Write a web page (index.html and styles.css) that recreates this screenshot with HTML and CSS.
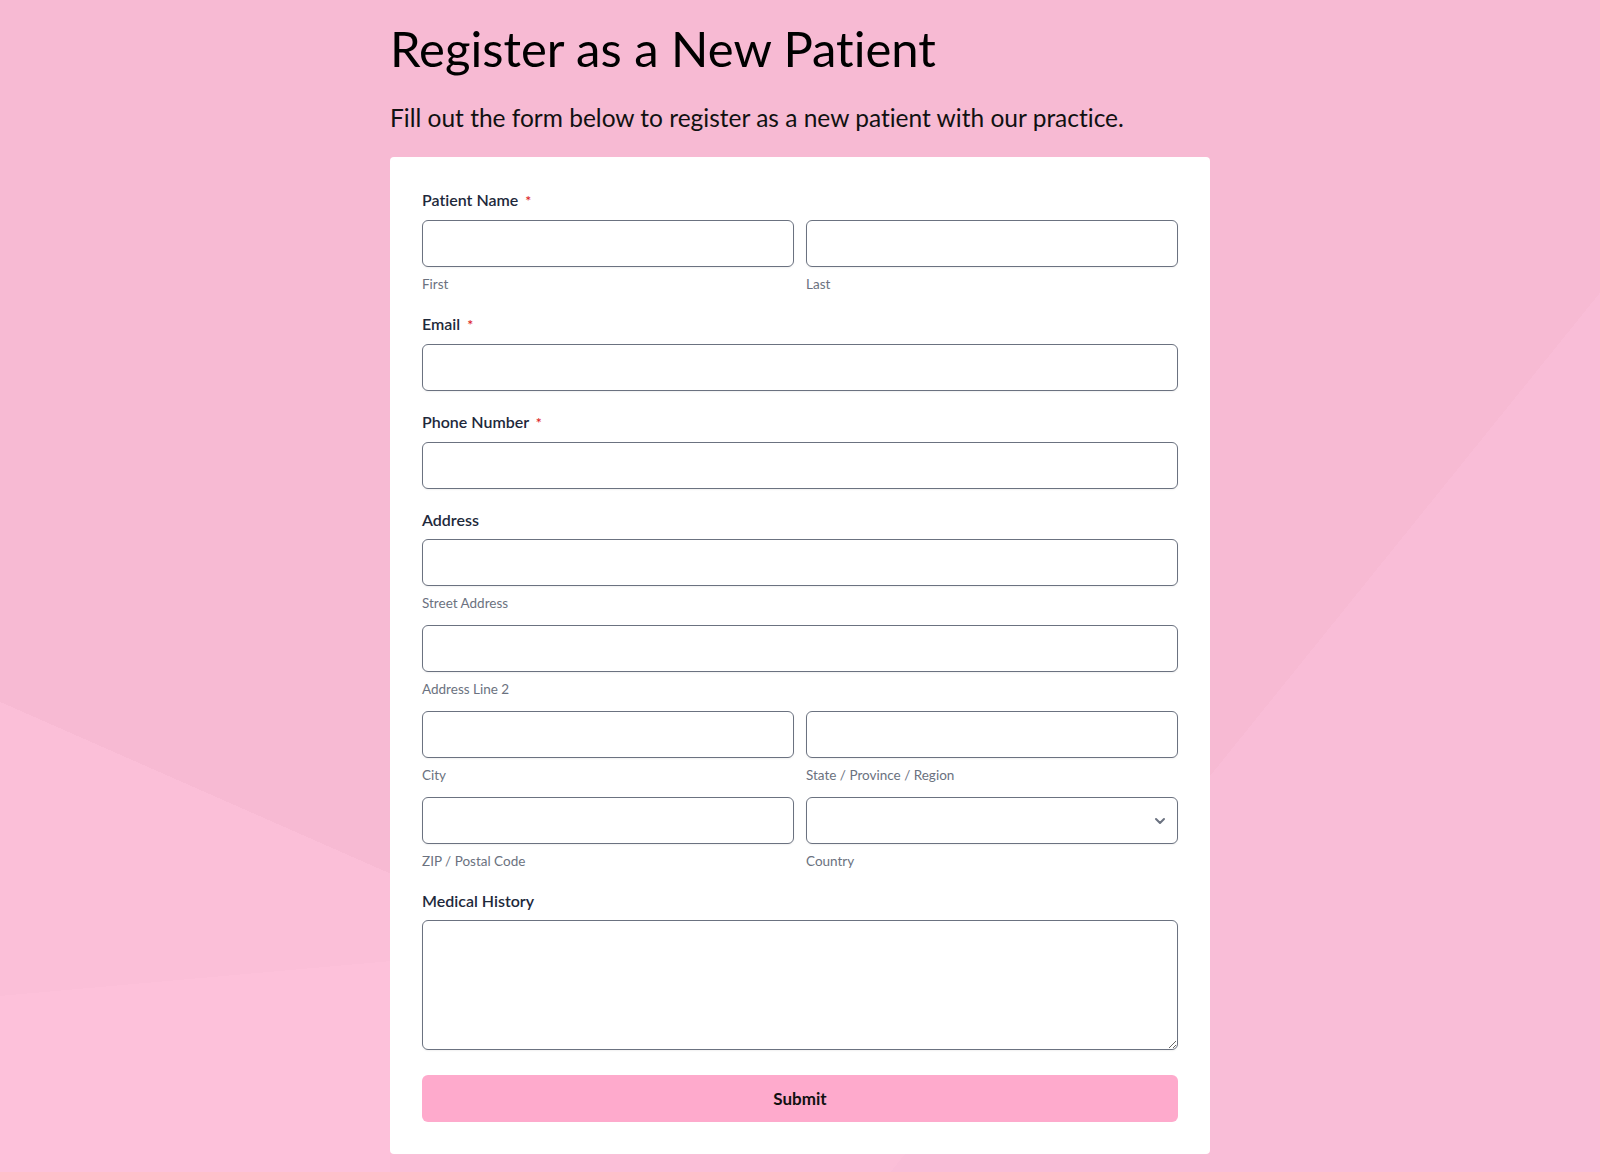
FILE: index.html
```html
<!DOCTYPE html>
<html lang="en">

<head>
    <meta charset="UTF-8">
    <meta name="viewport" content="width=device-width, initial-scale=1.0">
    <title>Register as a New Patient</title>
    <link rel="stylesheet" href="styles.css">
</head>

<body>
    <div class="page">
        <main class="wrap">
            <h1 class="title">Register as a New Patient</h1>
            <p class="intro">Fill out the form below to register as a new patient with our practice.</p>

            <form class="card">
                <!-- name -->
                <div class="field">
                    <label class="label">Patient Name <span class="req">*</span></label>
                    <div class="row">
                        <div class="part">
                            <input type="text" class="input">
                            <span class="sub">First</span>
                        </div>
                        <div class="part">
                            <input type="text" class="input">
                            <span class="sub">Last</span>
                        </div>
                    </div>
                </div>

                <div class="field">
                    <label class="label">Email <span class="req">*</span></label>
                    <input type="email" class="input">
                </div>

                <div class="field">
                    <label class="label">Phone Number <span class="req">*</span></label>
                    <input type="tel" class="input">
                </div>

                <!-- address -->
                <div class="field">
                    <label class="label">Address</label>
                    <div class="stack">
                        <div class="part">
                            <input type="text" class="input">
                            <span class="sub">Street Address</span>
                        </div>
                        <div class="part">
                            <input type="text" class="input">
                            <span class="sub">Address Line 2</span>
                        </div>
                        <div class="row">
                            <div class="part">
                                <input type="text" class="input">
                                <span class="sub">City</span>
                            </div>
                            <div class="part">
                                <input type="text" class="input">
                                <span class="sub">State / Province / Region</span>
                            </div>
                        </div>
                        <div class="row">
                            <div class="part">
                                <input type="text" class="input">
                                <span class="sub">ZIP / Postal Code</span>
                            </div>
                            <div class="part">
                                <div class="select-box">
                                    <select class="input select">
                                        <option></option>
                                    </select>
                                    <svg class="chevron" width="12" height="8" viewBox="0 0 12 8">
                                        <path d="M2 2l4 4 4-4" fill="none" stroke="#6b7280" stroke-width="2" stroke-linecap="round" stroke-linejoin="round"/>
                                    </svg>
                                </div>
                                <span class="sub">Country</span>
                            </div>
                        </div>
                    </div>
                </div>

                <div class="field">
                    <label class="label">Medical History</label>
                    <textarea class="input area"></textarea>
                </div>

                <button type="button" class="submit">Submit</button>
            </form>
        </main>
    </div>
</body>

</html>
```

FILE: styles.css
```css
* {
    box-sizing: border-box;
}

body {
    margin: 0;
    font-family: Lato, "Noto Sans", sans-serif;
    font-variant-ligatures: none;
}

/* soft pink facets behind the form */
.page {
    min-height: 100vh;
    background:
        linear-gradient(174.9deg, transparent 992px, #fdc1da 992px) left top / 390px 100% no-repeat,
        linear-gradient(128.9deg, transparent 1429px, #f9bdd7 1429px),
        linear-gradient(203.75deg, transparent 1286.8px, #fbbfd8 1286.8px),
        #f7bad3;
    background-attachment: fixed;
}

.wrap {
    width: 820px;
    margin: 0 auto;
    padding: 19px 0 18px;
}

.title {
    margin: 0;
    font-size: 49px;
    font-weight: 400;
    line-height: 1.2;
    color: #000;
}

.intro {
    margin: 25px 0 25px;
    font-size: 24.5px;
    line-height: 1.2;
    color: #111;
}

.card {
    background: #fff;
    border-radius: 4px;
    padding: 33px 32px 32px;
}

.field {
    margin-bottom: 21px;
}

.label {
    display: block;
    margin-bottom: 9px;
    font-size: 16px;
    line-height: 20px;
    font-weight: 600;
    color: #1e293b;
}

.req {
    margin-left: 3px;
    font-size: 14px;
    color: #dc2626;
}

.row {
    display: grid;
    grid-template-columns: 1fr 1fr;
    column-gap: 12px;
}

.stack {
    display: flex;
    flex-direction: column;
    gap: 13px;
}

.part {
    display: flex;
    flex-direction: column;
}

.input {
    display: block;
    width: 100%;
    height: 47px;
    margin: 0;
    padding: 0 12px;
    border: 1px solid #6b7280;
    border-radius: 6px;
    background: #fff;
    box-shadow: 0 1px 2px rgba(0, 0, 0, 0.06);
    font-family: inherit;
    font-size: 15px;
    outline: none;
}

.sub {
    margin-top: 8px;
    font-size: 13.5px;
    line-height: 18px;
    color: #6b7280;
}

.select-box {
    position: relative;
}

.select {
    appearance: none;
    -webkit-appearance: none;
}

.chevron {
    position: absolute;
    right: 12px;
    top: 20px;
    pointer-events: none;
}

.area {
    height: 130px;
    padding: 10px 12px;
    resize: vertical;
}

.submit {
    display: block;
    width: 100%;
    height: 47px;
    margin-top: 25px;
    border: 0;
    border-radius: 6px;
    background: #feaacc;
    font-family: inherit;
    font-size: 17px;
    font-weight: 700;
    color: #111;
    cursor: pointer;
}
```
